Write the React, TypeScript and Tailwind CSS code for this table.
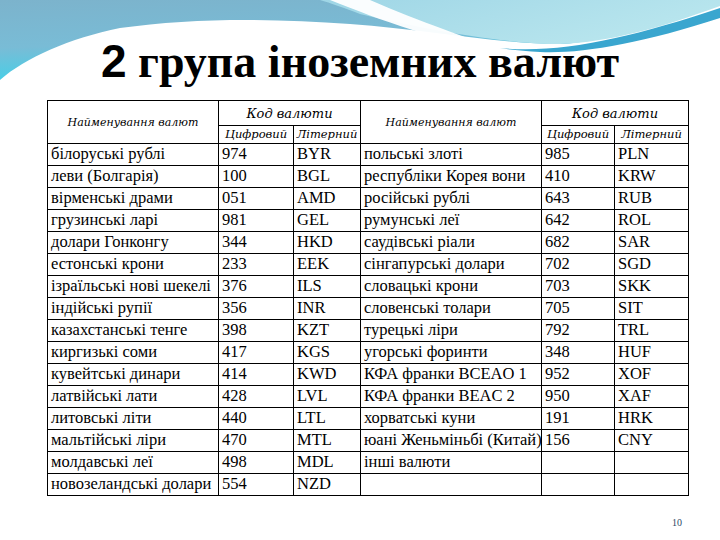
import React from "react";

type Row = { name: string; num: string; code: string };

const leftRows: Row[] = [
  { name: "білоруські рублі", num: "974", code: "BYR" },
  { name: "леви (Болгарія)", num: "100", code: "BGL" },
  { name: "вірменські драми", num: "051", code: "AMD" },
  { name: "грузинські ларі", num: "981", code: "GEL" },
  { name: "долари Гонконгу", num: "344", code: "HKD" },
  { name: "естонські крони", num: "233", code: "EEK" },
  { name: "ізраїльські нові шекелі", num: "376", code: "ILS" },
  { name: "індійські рупії", num: "356", code: "INR" },
  { name: "казахстанські тенге", num: "398", code: "KZT" },
  { name: "киргизькі соми", num: "417", code: "KGS" },
  { name: "кувейтські динари", num: "414", code: "KWD" },
  { name: "латвійські лати", num: "428", code: "LVL" },
  { name: "литовські літи", num: "440", code: "LTL" },
  { name: "мальтійські ліри", num: "470", code: "MTL" },
  { name: "молдавські леї", num: "498", code: "MDL" },
  { name: "новозеландські долари", num: "554", code: "NZD" },
];

const rightRows: Row[] = [
  { name: "польські злоті", num: "985", code: "PLN" },
  { name: "республіки Корея вони", num: "410", code: "KRW" },
  { name: "російські рублі", num: "643", code: "RUB" },
  { name: "румунські леї", num: "642", code: "ROL" },
  { name: "саудівські ріали", num: "682", code: "SAR" },
  { name: "сінгапурські долари", num: "702", code: "SGD" },
  { name: "словацькі крони", num: "703", code: "SKK" },
  { name: "словенські толари", num: "705", code: "SIT" },
  { name: "турецькі ліри", num: "792", code: "TRL" },
  { name: "угорські форинти", num: "348", code: "HUF" },
  { name: "КФА франки  BCEAO 1", num: "952", code: "XOF" },
  { name: "КФА франки  BEAC 2", num: "950", code: "XAF" },
  { name: "хорватські куни", num: "191", code: "HRK" },
  { name: "юані Женьміньбі (Китай)", num: "156", code: "CNY" },
  { name: "інші валюти", num: "", code: "" },
  { name: "", num: "", code: "" },
];

const cell =
  "border border-black h-[22px] p-0 pl-[3px] align-middle whitespace-nowrap overflow-hidden leading-none text-[16.5px] font-['Liberation_Serif']";
const head =
  "border border-black p-0 text-center align-middle italic font-normal font-['DejaVu_Serif'] whitespace-nowrap leading-none";

const WaveBackground = () => (
  <svg className="absolute inset-0" width="720" height="540" viewBox="0 0 720 540">
    <defs>
      <linearGradient id="leftBlue" x1="0" y1="0" x2="0.3" y2="1">
        <stop offset="0" stopColor="#7cb3cc" />
        <stop offset="0.55" stopColor="#79bcd6" />
        <stop offset="1" stopColor="#3fd2ea" />
      </linearGradient>
      <linearGradient id="rightBlue" x1="0" y1="0" x2="1" y2="0.4">
        <stop offset="0" stopColor="#9fd6e6" />
        <stop offset="1" stopColor="#b9e6ee" />
      </linearGradient>
    </defs>
    <path
      d="M0 0 H720 V4 C660 20 610 42 560 44 C500 44 430 30 350 24 C270 18 190 18 120 28 C70 38 25 58 0 80 Z"
      fill="url(#leftBlue)"
    />
    <path
      d="M320 0 H720 V6 C660 28 610 42 560 44 C500 44 420 28 360 14 C345 8 330 3 320 0 Z"
      fill="url(#rightBlue)"
    />
    <path d="M330 0 C380 20 440 42 505 52 C470 38 420 22 370 0 Z" fill="#ffffff" opacity="0.95" />
    <path
      d="M500 48 C560 54 630 38 720 8 V18 C640 44 580 54 540 52 C525 51 510 50 500 48 Z"
      fill="#3aa6cf"
    />
  </svg>
);

export default function App() {
  return (
    <div className="relative w-[720px] h-[540px] overflow-hidden bg-white text-black font-['Liberation_Serif']">
      <WaveBackground />
      <div className="relative">
        <h1 className="pt-[38px] text-center text-[46px] leading-none font-bold font-['Liberation_Serif']">
          <span className="font-['Liberation_Sans']">2</span> група іноземних валют
        </h1>
        <table className="ml-[47px] mt-[15px] w-[641px] border-collapse table-fixed bg-white">
          <colgroup>
            <col className="w-[171px]" />
            <col className="w-[75px]" />
            <col className="w-[67px]" />
            <col className="w-[181px]" />
            <col className="w-[73px]" />
            <col className="w-[74px]" />
          </colgroup>
          <thead>
            <tr className="h-[25px]">
              <th rowSpan={2} className={`${head} text-[11px]`}>
                Найменування валют
              </th>
              <th colSpan={2} className={`${head} text-[13px]`}>
                Код валюти
              </th>
              <th rowSpan={2} className={`${head} text-[11px]`}>
                Найменування валют
              </th>
              <th colSpan={2} className={`${head} text-[13px]`}>
                Код валюти
              </th>
            </tr>
            <tr className="h-[18px]">
              <th className={`${head} text-[11.5px]`}>Цифровий</th>
              <th className={`${head} text-[11.5px]`}>Літерний</th>
              <th className={`${head} text-[11.5px]`}>Цифровий</th>
              <th className={`${head} text-[11.5px]`}>Літерний</th>
            </tr>
          </thead>
          <tbody>
            {leftRows.map((row, i) => {
              const r = rightRows[i];
              return (
                <tr key={i} className="h-[22px]">
                  <td className={cell}>{row.name}</td>
                  <td className={cell}>{row.num}</td>
                  <td className={cell}>{row.code}</td>
                  <td className={cell}>{r.name}</td>
                  <td className={cell}>{r.num}</td>
                  <td className={cell}>{r.code}</td>
                </tr>
              );
            })}
          </tbody>
        </table>
        <div className="mt-[22px] pl-[672px] text-[10px] leading-none text-[#2c4a66]">10</div>
      </div>
    </div>
  );
}
